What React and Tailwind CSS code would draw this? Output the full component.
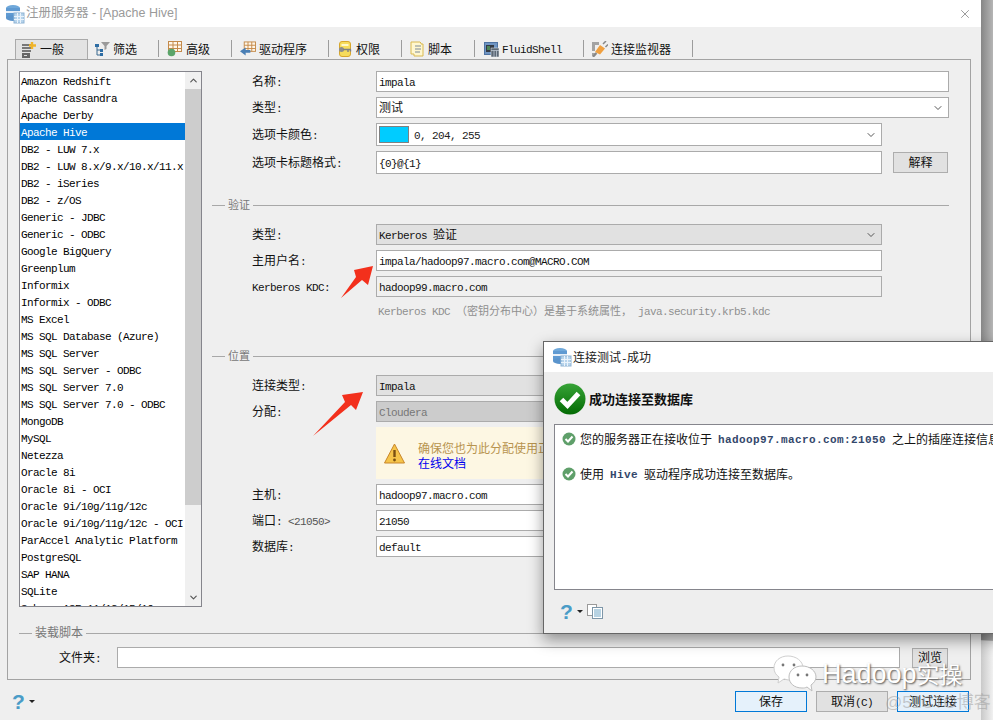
import { ChevronDown, ChevronUp, X } from 'lucide-react'

const DRIVERS = [
  'Amazon Redshift', 'Apache Cassandra', 'Apache Derby', 'Apache Hive', 'DB2 - LUW 7.x',
  'DB2 - LUW 8.x/9.x/10.x/11.x', 'DB2 - iSeries', 'DB2 - z/OS', 'Generic - JDBC', 'Generic - ODBC',
  'Google BigQuery', 'Greenplum', 'Informix', 'Informix - ODBC', 'MS Excel',
  'MS SQL Database (Azure)', 'MS SQL Server', 'MS SQL Server - ODBC', 'MS SQL Server 7.0',
  'MS SQL Server 7.0 - ODBC', 'MongoDB', 'MySQL', 'Netezza', 'Oracle 8i', 'Oracle 8i - OCI',
  'Oracle 9i/10g/11g/12c', 'Oracle 9i/10g/11g/12c - OCI', 'ParAccel Analytic Platform',
  'PostgreSQL', 'SAP HANA', 'SQLite', 'Sybase ASE 11/12/15/16',
]

// SimSun-ish mix: latin is 6px per char, CJK 12px per char (11px when small)
function T({ children, bold, small }) {
  const parts = String(children).split(/([\u3000-\u9fff\uff00-\uffef]+)/)
  return (
    <span className="inline-block pt-px whitespace-pre leading-none">
      {parts.map((p, i) =>
        i % 2 === 1 ? (
          <span key={i} className={`${small ? 'text-[11px]' : 'text-[12px]'} [font-family:'Noto_Sans_CJK_SC',sans-serif]`}>{p}</span>
        ) : bold ? (
          <span key={i} className="text-[11px] font-bold tracking-[0.4px] text-[#33476b] [font-family:'Liberation_Mono',monospace]">{p}</span>
        ) : (
          <span key={i} className="text-[11px] tracking-[-0.6px] [font-family:'Liberation_Mono',monospace]">{p}</span>
        )
      )}
    </span>
  )
}

function DbIcon() {
  return (
    <svg width="20" height="20" viewBox="0 0 20 20">
      <ellipse cx="8" cy="4" rx="7" ry="3" fill="#6fa8da" />
      <rect x="1" y="4" width="14" height="10" fill="#5f9ad2" />
      <rect x="1" y="7" width="14" height="2" fill="#e6eff8" />
      <ellipse cx="8" cy="14" rx="7" ry="3" fill="#5a94cc" />
      <rect x="9" y="9" width="10" height="10" fill="#b7d4ec" stroke="#8fb4d4" />
      <path d="M9 12.5h10M9 15.5h10M12.5 9v10M15.5 9v10" stroke="#eaf3fb" />
    </svg>
  )
}

const TabIcons = {
  general: (
    <svg width="16" height="16" viewBox="0 0 16 16">
      <path d="M1 3h9M1 6h9M1 9h9" stroke="#777" strokeWidth="2" />
      <rect x="1" y="11" width="8" height="5" fill="#666" />
      <rect x="3" y="13" width="3" height="1" fill="#ddd" />
      <path d="M11 0v7M8 3.5h7" stroke="#f0b429" strokeWidth="2.4" />
    </svg>
  ),
  filter: (
    <svg width="16" height="16" viewBox="0 0 16 16">
      <path d="M7 1h9l-3.5 4v3l-2 1V5z" fill="#9a9a9a" />
      <path d="M3 5v9h5M3 9h5" stroke="#39688f" fill="none" />
      <rect x="1" y="3" width="4" height="3" fill="#2e6da4" />
      <rect x="6" y="8" width="3" height="3" fill="#2e6da4" />
      <rect x="6" y="12" width="3" height="3" fill="#2e6da4" />
    </svg>
  ),
  advanced: (
    <svg width="16" height="16" viewBox="0 0 16 16">
      <rect x="1.5" y="0.5" width="13" height="10" fill="#fff6e8" stroke="#c48a4a" />
      <path d="M1.5 4h13M1.5 7.5h13M6 0.5v10M10.5 0.5v10" stroke="#c48a4a" />
      <circle cx="4.5" cy="11.5" r="3.8" fill="#5aa469" />
    </svg>
  ),
  driver: (
    <svg width="17" height="16" viewBox="0 0 17 16">
      <rect x="4.5" y="0.5" width="12" height="10" fill="#fff6e8" stroke="#c48a4a" />
      <path d="M4.5 4h12M4.5 7.5h12M8.5 0.5v10M12.5 0.5v10" stroke="#c48a4a" />
      <path d="M0 10.5l6-4v2.5h5v3H6V15z" fill="#4a7fb5" />
    </svg>
  ),
  perms: (
    <svg width="14" height="16" viewBox="0 0 14 16">
      <rect x="1.5" y="0.5" width="11" height="15" rx="2.5" fill="#f6dc5c" stroke="#d8a72c" />
      <rect x="3.5" y="3" width="7" height="2" fill="#fff8c9" />
      <circle cx="3.5" cy="8.5" r="2.5" fill="#8c8c8c" />
      <path d="M5 8.5h8M10 8.5v2.5M12.5 8.5v2" stroke="#808080" strokeWidth="1.4" />
    </svg>
  ),
  script: (
    <svg width="14" height="16" viewBox="0 0 14 16">
      <path d="M1 1h9l1 1v1h2v12H4v-2H1z" fill="#fff7cf" stroke="#d9b950" />
      <path d="M5 5h6M5 8h6M5 11h5" stroke="#7d8a99" />
    </svg>
  ),
  shell: (
    <svg width="15" height="15" viewBox="0 0 15 15">
      <rect x="0.5" y="0.5" width="13" height="12" fill="#6f94c2" stroke="#4f73a3" />
      <rect x="2" y="3" width="8" height="7" fill="#333a45" />
      <path d="M3 5h3M3 7h3" stroke="#6ad16a" />
      <rect x="7" y="6" width="8" height="9" fill="#5c6875" stroke="#eee" strokeWidth="0.5" />
      <path d="M7 8.5h8M10 8.5v6.5M12.5 8.5v6.5" stroke="#c9d2dc" strokeWidth="0.7" />
    </svg>
  ),
  monitor: (
    <svg width="16" height="16" viewBox="0 0 16 16">
      <path d="M0 1h7v3H3v6H0zM0 12h3v3H0z" fill="#a3a3a3" />
      <path d="M3 11l5-7 5 3.5-5 6z" fill="#f0a040" />
      <path d="M1 16l3.5-4" stroke="#888" strokeWidth="2" />
      <path d="M11 3l3-3M13.5 6L16 3.5" stroke="#888" strokeWidth="1.5" />
    </svg>
  ),
}

const TABS = [
  { label: '筛选', icon: TabIcons.filter, w: 'w-[71px] pl-[6px]' },
  { label: '高级', icon: TabIcons.advanced, w: 'w-[73px] pl-[8px]' },
  { label: '驱动程序', icon: TabIcons.driver, w: 'w-[97px] pl-[8px]' },
  { label: '权限', icon: TabIcons.perms, w: 'w-[73px] pl-[8px]' },
  { label: '脚本', icon: TabIcons.script, w: 'w-[73px] pl-[7px]' },
  { label: 'FluidShell', icon: TabIcons.shell, w: 'w-[109px] pl-[8px]' },
  { label: '连接监视器', icon: TabIcons.monitor, w: 'w-[109px] pl-[8px]' },
]

function Field({ label, children, className = '' }) {
  return (
    <div className={`flex items-center text-[#111] ${className}`}>
      <div className="w-[164px] pl-[40px]">{label}</div>
      {children}
    </div>
  )
}

function Box({ value, w = 'w-[506px]', bg = 'bg-white', muted, caret, h = 'h-[21px]' }) {
  return (
    <div className={`flex items-center justify-between ${w} ${h} ${bg} border border-[#ababab] pl-[2px] pr-[4px] ${muted ? 'text-[#777]' : 'text-[#111]'}`}>
      <T>{value}</T>
      {caret && <ChevronDown size={12} strokeWidth={1.8} className="text-[#444]" />}
    </div>
  )
}

function SectionLine({ label, small, className = '' }) {
  return (
    <div className={`flex items-center h-[14px] text-[#777] ${className}`}>
      <div className="w-[13px] h-px bg-[#a8a8a8]" />
      <div className="px-[3px]"><T small={small}>{label}</T></div>
      <div className="flex-1 h-px bg-[#a8a8a8]" />
    </div>
  )
}

function Help() {
  return (
    <div className="flex items-center gap-[4px]">
      <span className="text-[21px] leading-none font-bold text-[#4a9cc7] [font-family:'Liberation_Sans',sans-serif]">?</span>
      <span className="w-0 h-0 border-x-[3px] border-x-transparent border-t-[3px] border-t-[#222]" />
    </div>
  )
}

function SmallCheck() {
  return (
    <svg width="14" height="14" viewBox="0 0 14 14" className="shrink-0">
      <circle cx="7" cy="7" r="6.5" fill="#5f9f6a" />
      <path d="M3.5 7l2.5 2.5 4.5-5" fill="none" stroke="#fff" strokeWidth="2" />
    </svg>
  )
}

function Watermark() {
  return (
    <>
      <svg width="46" height="40" viewBox="0 0 46 40" className="absolute left-[773px] top-[655px]">
        <path d="M15 1C7 1 1 6 1 13c0 4 2 7 5 9l-1 6 6-4c1 0 3 1 5 1 8 0 14-5 14-12S23 1 15 1z" fill="#fff" stroke="#cfcfcf" />
        <circle cx="10" cy="10" r="1.4" fill="#777" />
        <circle cx="21" cy="10" r="1.4" fill="#777" />
        <path d="M29 11c-8 0-13 5-13 11s5 11 13 11c2 0 3 0 5-1l5 4-1-6c3-2 5-5 5-8 0-6-6-11-14-11z" fill="#fff" stroke="#bdbdbd" />
        <circle cx="25" cy="20" r="1.4" fill="#777" />
        <circle cx="34" cy="20" r="1.4" fill="#777" />
      </svg>
      <div className="absolute left-[822px] top-[656px] flex items-baseline text-white [text-shadow:1px_1px_2px_#555]">
        <span className="text-[27px] leading-[34px] [font-family:'Liberation_Sans',sans-serif]">Hadoop</span>
        <span className="text-[23px] leading-[34px] [font-family:'Noto_Sans_CJK_SC',sans-serif]">实操</span>
      </div>
      <div className="absolute left-[885px] top-[692px] text-[17px] leading-[22px] text-[#9a9a9a]/50 whitespace-nowrap [font-family:'Liberation_Sans','Noto_Sans_CJK_SC',sans-serif]">@51CTO博客</div>
    </>
  )
}

function ConnectionDialog() {
  return (
    <div className="absolute left-[543px] top-[341px] w-[470px] h-[293px] border border-[#666] bg-[#eeeeee] flex flex-col shadow-[0_6px_14px_rgba(0,0,0,0.4)]">
      <div className="h-[30px] bg-white flex items-center pl-[8px] gap-[1px] text-[#222]">
        <DbIcon />
        <T>连接测试-成功</T>
      </div>
      <div className="flex items-center h-[52px] pl-[10px] gap-[3px] pt-[1px]">
        <svg width="32" height="32" viewBox="0 0 32 32" className="shrink-0">
          <defs>
            <linearGradient id="okGreen" x1="0" y1="0" x2="0" y2="1">
              <stop offset="0" stopColor="#37a337" />
              <stop offset="1" stopColor="#036b03" />
            </linearGradient>
          </defs>
          <circle cx="16" cy="16" r="15.5" fill="url(#okGreen)" />
          <path d="M7.5 16.5l6 6 11-12" fill="none" stroke="#fff" strokeWidth="5" />
        </svg>
        <span className="text-[13px] font-bold text-[#111] [font-family:'Noto_Sans_CJK_SC',sans-serif]">成功连接至数据库</span>
      </div>
      <div className="ml-[10px] h-[166px] bg-white border border-[#85858c] pl-[7px] pt-[7px] text-[#111]">
        <div className="flex items-center h-[14px] gap-[4px]">
          <SmallCheck />
          <span className="flex items-center">
            <T>您的服务器正在接收位于 </T><T bold>hadoop97.macro.com:21050</T><T> 之上的插座连接信息</T>
          </span>
        </div>
        <div className="flex items-center h-[14px] gap-[4px] mt-[21px]">
          <SmallCheck />
          <span className="flex items-center">
            <T>使用 </T><T bold>Hive</T><T> 驱动程序成功连接至数据库。</T>
          </span>
        </div>
      </div>
      <div className="flex items-center pl-[16px] pt-[11px] gap-[4px]">
        <Help />
        <svg width="16" height="15" viewBox="0 0 16 15">
          <rect x="0.5" y="0.5" width="9" height="11" fill="#fff" stroke="#9a9a9a" />
          <rect x="5.5" y="3.5" width="10" height="11" fill="#fff" stroke="#7d96a8" />
          <path d="M7 6h7M7 8h7M7 10h7M7 12h7" stroke="#6ea6c6" />
        </svg>
      </div>
    </div>
  )
}

export default function App() {
  return (
    <div className="relative w-[993px] h-[720px] overflow-hidden flex text-[12px] bg-[#efefef]">
      {/* main window */}
      <div className="w-[981px] h-full flex flex-col">
        <div className="h-[27px] bg-white flex items-center justify-between pl-[5px] pr-[9px] shrink-0">
          <div className="flex items-center gap-[1px]">
            <DbIcon />
            <span className="text-[12.5px] text-[#9a9a9a] [font-family:'Liberation_Sans','Noto_Sans_CJK_SC',sans-serif]">注册服务器 - [Apache Hive]</span>
          </div>
          <X size={14} strokeWidth={1} className="text-[#555]" />
        </div>

        {/* tabs */}
        <div className="flex h-[20px] mt-[12px] ml-[15px] shrink-0 text-[#111]">
          <div className="w-[73px] flex items-center bg-[#e3e3e3] border border-b-0 border-[#aaa] pl-[5px] gap-[3px]">
            {TabIcons.general}
            <T>一般</T>
          </div>
          {TABS.map((t) => (
            <div key={t.label} className={`${t.w} relative flex items-center gap-[3px]`}>
              <div className="w-[16px] flex justify-center">{t.icon}</div>
              <T>{t.label}</T>
              <div className="absolute right-0 top-[1px] h-[17px] w-px bg-[#9c9c9c]" />
            </div>
          ))}
        </div>

        {/* panel */}
        <div className="ml-[7px] w-[964px] h-[621px] border border-[#a3a3a3] pt-[11px] pl-[11px] shrink-0">
          <div className="flex">
            <div className="w-[183px] h-[536px] border border-[#85858c] bg-white flex overflow-hidden shrink-0 text-black">
              <div className="w-[165px]">
                {DRIVERS.map((d) => (
                  <div key={d} className={`h-[17px] flex items-center pl-[1px] whitespace-nowrap ${d === 'Apache Hive' ? 'bg-[#0078d7] text-white' : ''}`}>
                    <T>{d}</T>
                  </div>
                ))}
              </div>
              <div className="w-[16px] flex flex-col bg-[#f0f0f0]">
                <div className="h-[17px] flex items-center justify-center"><ChevronUp size={11} strokeWidth={2.5} className="text-[#555]" /></div>
                <div className="h-[416px] bg-[#cdcdcd]" />
                <div className="flex-1" />
                <div className="h-[17px] flex items-center justify-center"><ChevronDown size={11} strokeWidth={2.5} className="text-[#555]" /></div>
              </div>
            </div>

            <div className="w-[737px] ml-[10px]">
              <Field label={<T>名称:</T>}><Box value="impala" w="w-[573px]" /></Field>
              <Field label={<T>类型:</T>} className="mt-[5px]"><Box value="测试" w="w-[573px]" caret /></Field>
              <Field label={<T>选项卡颜色:</T>} className="mt-[5px]">
                <div className="w-[506px] h-[23px] bg-white border border-[#ababab] flex items-center justify-between pl-[2px] pr-[4px] text-[#222]">
                  <div className="flex items-center gap-[5px]">
                    <div className="w-[30px] h-[17px] bg-[#00ccff] border border-[#808080]" />
                    <T>0, 204, 255</T>
                  </div>
                  <ChevronDown size={12} strokeWidth={1.8} className="text-[#444]" />
                </div>
              </Field>
              <Field label={<T>选项卡标题格式:</T>} className="mt-[5px]">
                <Box value="{0}@{1}" h="h-[23px]" />
                <div className="ml-[11px] w-[55px] h-[21px] bg-[#e1e1e1] border border-[#adadad] flex items-center justify-center"><T>解释</T></div>
              </Field>

              <SectionLine label="验证" small className="mt-[24px] mb-[12px]" />
              <Field label={<T>类型:</T>}><Box value="Kerberos 验证" bg="bg-[#e1e1e1]" caret /></Field>
              <Field label={<T>主用户名:</T>} className="mt-[5px]"><Box value="impala/hadoop97.macro.com@MACRO.COM" /></Field>
              <Field label={<T>Kerberos KDC:</T>} className="mt-[5px]"><Box value="hadoop99.macro.com" bg="bg-[#f0f0f0]" /></Field>
              <div className="pl-[166px] h-[14px] mt-[7px] flex items-center text-[#8f8f8f]">
                <T small>Kerberos KDC （密钥分布中心）是基于系统属性， java.security.krb5.kdc</T>
              </div>

              <SectionLine label="位置" small className="mt-[31px] mb-[12px]" />
              <Field label={<T>连接类型:</T>}><Box value="Impala" bg="bg-[#e1e1e1]" caret /></Field>
              <Field label={<T>分配:</T>} className="mt-[5px]"><Box value="Cloudera" bg="bg-[#cccccc]" muted caret /></Field>
              <div className="ml-[164px] mt-[5px] w-[506px] h-[52px] bg-[#fdf7e3] flex items-center pl-[8px] gap-[13px]">
                <svg width="21" height="21" viewBox="0 0 21 21" className="shrink-0">
                  <path d="M10.5 1L20.5 20H.5z" fill="#f5c44a" stroke="#c8862a" strokeLinejoin="round" />
                  <path d="M10.5 7v7" stroke="#7a4f12" strokeWidth="2.4" />
                  <circle cx="10.5" cy="17" r="1.4" fill="#7a4f12" />
                </svg>
                <div className="flex flex-col pt-[5px]">
                  <span className="text-[#b8944f] leading-[15px]"><T>确保您也为此分配使用正确的驱动程序</T></span>
                  <span className="text-[#0000ee] underline leading-[15px]"><T>在线文档</T></span>
                </div>
              </div>
              <Field label={<T>主机:</T>} className="mt-[5px]"><Box value="hadoop97.macro.com" /></Field>
              <Field label={<><T>端口:</T><span className="text-[#555]"><T> &lt;21050&gt;</T></span></>} className="mt-[5px]"><Box value="21050" /></Field>
              <Field label={<T>数据库:</T>} className="mt-[5px]"><Box value="default" /></Field>
            </div>
          </div>

          {/* load script */}
          <SectionLine label="装载脚本" className="mt-[19px] w-[930px]" />
          <div className="flex items-center mt-[7px] text-[#111]">
            <div className="w-[98px] pl-[40px]"><T>文件夹:</T></div>
            <div className="w-[783px] h-[21px] bg-white border border-[#ababab]" />
            <div className="ml-[12px] w-[36px] h-[20px] bg-[#e1e1e1] border border-[#adadad] flex items-center justify-center"><T>浏览</T></div>
          </div>
        </div>

        {/* footer */}
        <div className="flex items-center justify-between pl-[12px] pr-[12px] pt-[11px] text-[#111]">
          <Help />
          <div className="flex gap-[9px]">
            <div className="w-[72px] h-[21px] bg-[#e5f1fb] border border-[#0078d7] flex items-center justify-center"><T>保存</T></div>
            <div className="w-[72px] h-[21px] bg-[#e1e1e1] border border-[#adadad] flex items-center justify-center"><T>取消(C)</T></div>
            <div className="w-[72px] h-[21px] bg-[#e5f1fb] border border-[#0078d7] flex items-center justify-center"><T>测试连接</T></div>
          </div>
        </div>
      </div>

      {/* what shows behind the window */}
      <div className="flex-1 flex flex-col">
        <div className="h-[640px] bg-gradient-to-r from-[#868686] to-[#b5b5b5]" />
        <div className="flex-1 bg-gradient-to-r from-[#c9c9c9] to-[#f1f1f1] border-t border-[#bbb]" />
      </div>

      {/* red annotation arrows */}
      <svg width="993" height="720" className="absolute inset-0 pointer-events-none">
        <polygon points="341,298 356,277 354,270 373,266 368,285 362,280" fill="#f3301c" />
        <polygon points="313,436 345,402 342,395 363,392 356,410 351,405" fill="#f3301c" />
      </svg>

      <ConnectionDialog />
      <Watermark />
    </div>
  )
}
